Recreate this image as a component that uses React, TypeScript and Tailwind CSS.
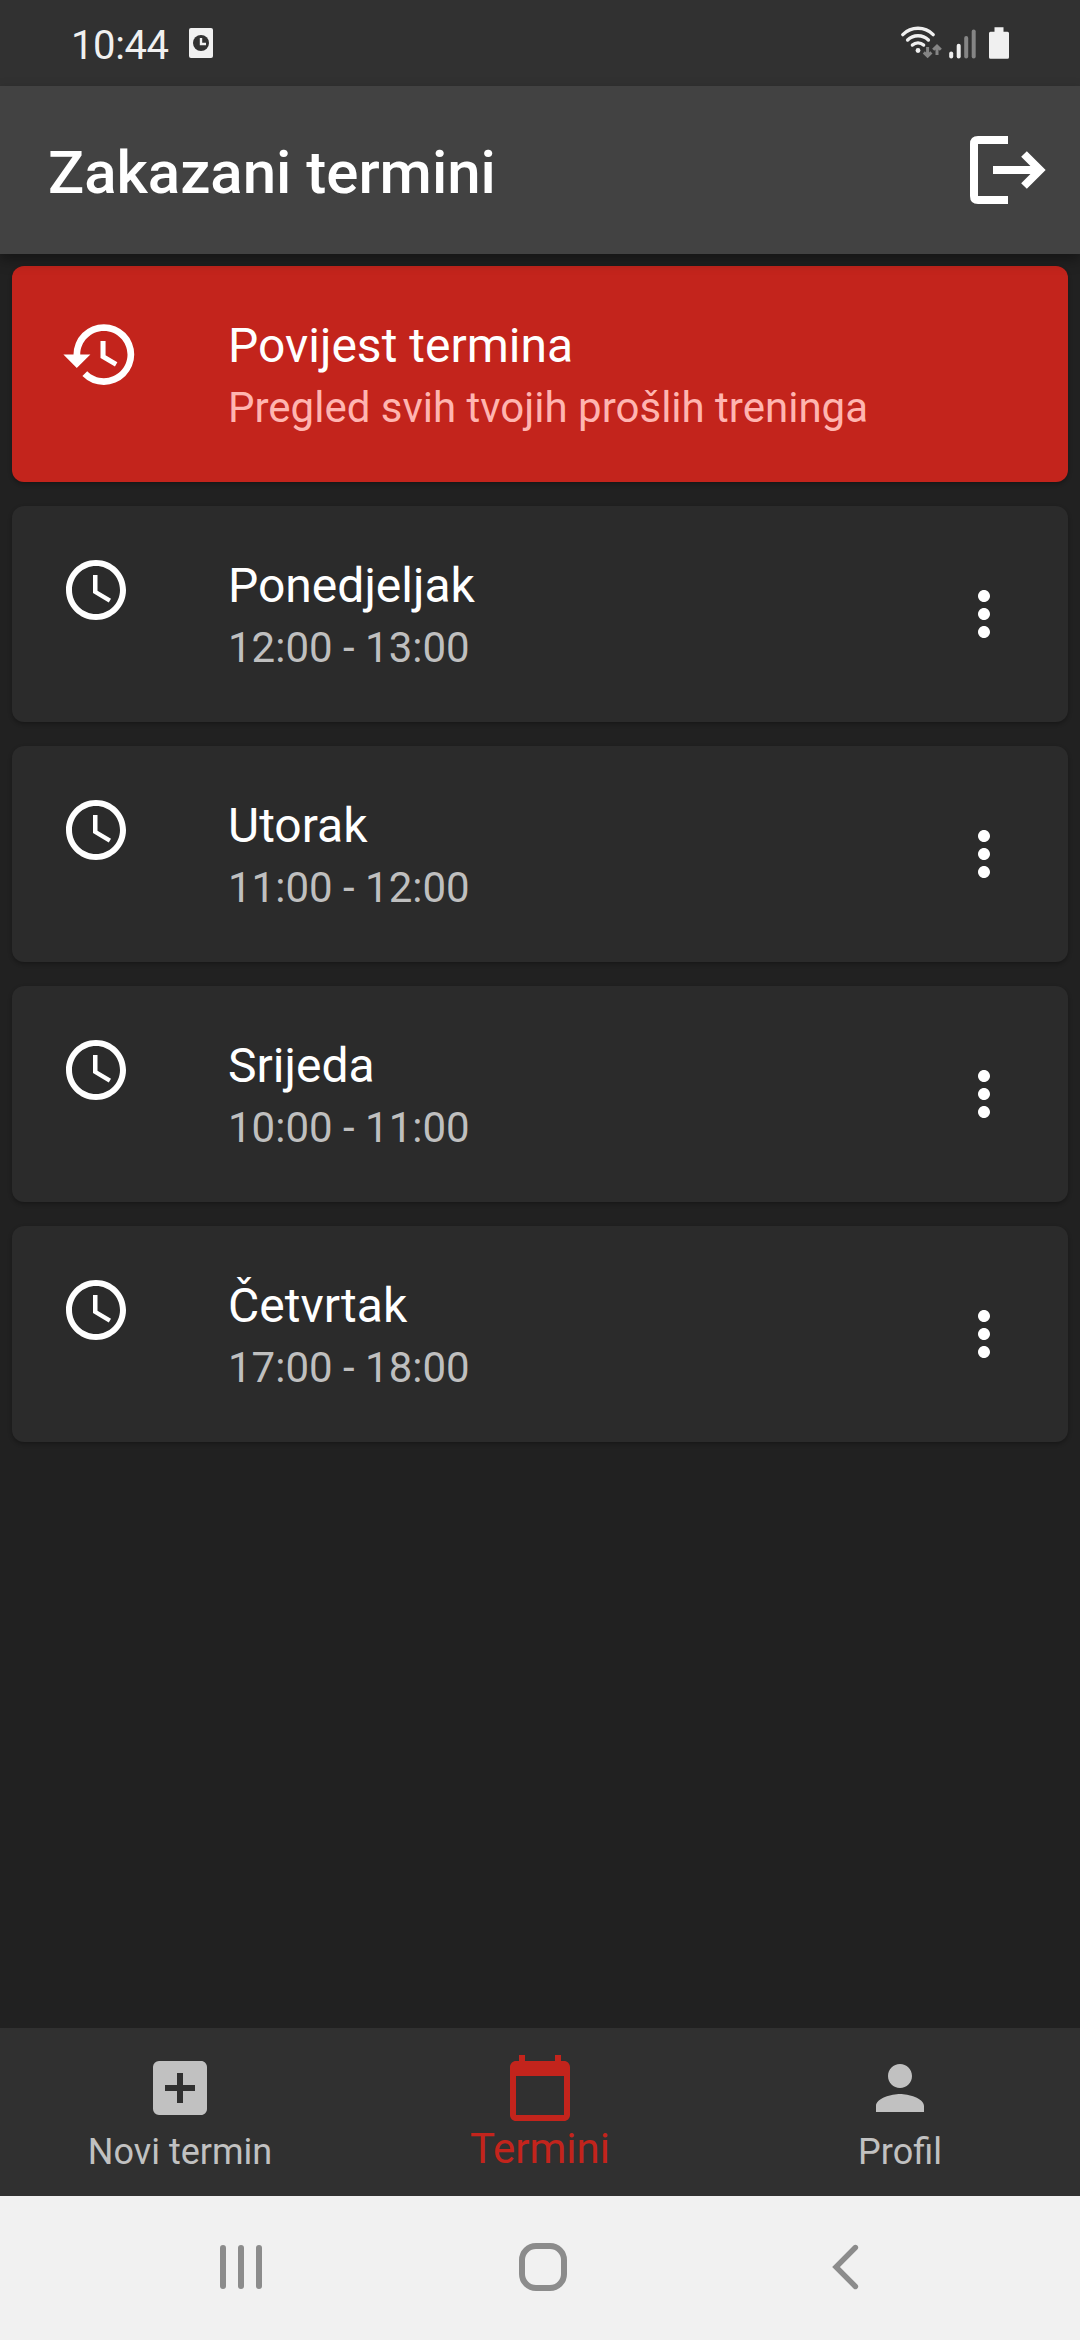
import { useState } from 'react';
import {
  MdAccessTime,
  MdAddBox,
  MdCalendarToday,
  MdHistory,
  MdMoreVert,
  MdPerson,
} from 'react-icons/md';

interface Appointment {
  id: number;
  day: string;
  time: string;
}

const appointments: Appointment[] = [
  { id: 1, day: 'Ponedjeljak', time: '12:00 - 13:00' },
  { id: 2, day: 'Utorak', time: '11:00 - 12:00' },
  { id: 3, day: 'Srijeda', time: '10:00 - 11:00' },
  { id: 4, day: 'Četvrtak', time: '17:00 - 18:00' },
];

const tabs = [
  { id: 'novi', label: 'Novi termin', icon: MdAddBox },
  { id: 'termini', label: 'Termini', icon: MdCalendarToday },
  { id: 'profil', label: 'Profil', icon: MdPerson },
];

function StatusBar() {
  return (
    <div className="flex h-[86px] shrink-0 items-start justify-between bg-[#313131] pl-[71px] pr-[70px] text-[#f0f0f0]">
      <div className="flex items-start">
        <span className="mt-[22px] text-[40px] leading-[48px] tracking-[-0.4px]">10:44</span>
        <svg className="ml-5 mt-7" width="24" height="30" viewBox="0 0 24 30">
          <rect width="24" height="30" rx="2" fill="#f0f0f0" />
          <circle cx="12" cy="15" r="8" fill="#313131" />
          <path d="M12 10v6h5" fill="none" stroke="#f0f0f0" strokeWidth="2.4" />
        </svg>
      </div>

      <svg className="mt-6" width="112" height="38" viewBox="898 24 112 38" fill="none">
        {/* Wi-Fi */}
        <g stroke="#f0f0f0" strokeWidth="3.4" strokeLinecap="round">
          <path d="M902.8 34.6a21.5 21.5 0 0 1 30.4 0" />
          <path d="M907.6 40a15 15 0 0 1 20.8 0" />
          <path d="M912.4 45a8.4 8.4 0 0 1 11.2 0" />
        </g>
        <circle cx="918" cy="50.5" r="2.4" fill="#f0f0f0" />
        <g stroke="#858585" strokeWidth="3">
          <path d="M927.6 47v9M923.8 52.4l3.8 3.8 3.8-3.8" />
          <path d="M937 55v-9M933.2 49.8l3.8-3.8 3.8 3.8" />
        </g>
        {/* Signal */}
        <g strokeWidth="4" strokeLinecap="round">
          <path d="M951.2 53.5v3" stroke="#f0f0f0" />
          <path d="M958.7 45.8v10.7" stroke="#f0f0f0" />
          <path d="M966.2 38v18.5" stroke="#858585" />
          <path d="M973.7 31.5v25" stroke="#858585" />
        </g>
        {/* Battery */}
        <path
          d="M994.5 27.3h9v4.5h4q1.5 0 1.5 1.5v24q0 1.5-1.5 1.5h-17q-1.5 0-1.5-1.5v-24q0-1.5 1.5-1.5h4z"
          fill="#f0f0f0"
        />
      </svg>
    </div>
  );
}

function AppBar() {
  return (
    <header className="z-10 flex h-[168px] shrink-0 items-center justify-between bg-[#424242] pl-12 pr-[34px] shadow-[0_6px_12px_rgba(0,0,0,0.35)]">
      <h1 className="pt-[5px] text-[60px] font-medium leading-[70px]">Zakazani termini</h1>
      <button aria-label="Odjava">
        <svg width="76" height="68" viewBox="0 0 76 68" fill="none" stroke="#fff" strokeWidth="8">
          <path d="M38 4H8Q4 4 4 8v52q0 4 4 4h30" />
          <path d="M23 34h46M54 18l16 16-16 16" />
        </svg>
      </button>
    </header>
  );
}

function AppointmentCard({ appointment }: { appointment: Appointment }) {
  return (
    <div className="flex h-[216px] items-start rounded-xl bg-[#2b2b2b] pl-12 pr-12 shadow-[0_2px_4px_rgba(0,0,0,0.3)]">
      <MdAccessTime size={72} className="mt-12 shrink-0" />
      <div className="ml-24 mt-[52px] flex-1">
        <h2 className="text-[48px] leading-[56px]">{appointment.day}</h2>
        <p className="mt-[9px] text-[42px] leading-[50px] text-[#bfbfbf]">{appointment.time}</p>
      </div>
      <button className="self-center" aria-label="Opcije">
        <MdMoreVert size={72} />
      </button>
    </div>
  );
}

export default function App() {
  const [activeTab, setActiveTab] = useState('termini');

  return (
    <div className="flex h-[2340px] w-[1080px] flex-col overflow-hidden bg-[#212121] font-[Roboto,sans-serif] text-white">
      <StatusBar />
      <AppBar />

      {/* List */}
      <main className="flex flex-1 flex-col gap-6 p-3">
        <div className="flex h-[216px] items-start rounded-xl bg-[#c3241c] pl-12 pr-12 shadow-[0_2px_4px_rgba(0,0,0,0.3)]">
          <MdHistory size={81} className="mt-12 shrink-0" />
          <div className="ml-[87px] mt-[52px] flex-1">
            <h2 className="text-[48px] leading-[56px]">Povijest termina</h2>
            <p className="mt-[9px] text-[42px] leading-[50px] text-[#ffb5b0]">
              Pregled svih tvojih prošlih treninga
            </p>
          </div>
        </div>
        {appointments.map((a) => (
          <AppointmentCard key={a.id} appointment={a} />
        ))}
      </main>

      {/* Bottom tabs */}
      <nav className="grid h-[168px] shrink-0 grid-cols-3 bg-[#303030]">
        {tabs.map(({ id, label, icon: Icon }) => (
          <button
            key={id}
            onClick={() => setActiveTab(id)}
            className={`flex flex-col items-center pt-6 ${
              activeTab === id ? 'text-[#c3241c]' : 'text-[#c1c1c1]'
            }`}
          >
            <Icon size={72} />
            <span
              className={
                activeTab === id
                  ? 'text-[42px] leading-[50px]'
                  : 'mt-1 text-[36px] leading-[48px]'
              }
            >
              {label}
            </span>
          </button>
        ))}
      </nav>

      {/* System navigation */}
      <div className="flex h-36 shrink-0 items-center bg-[#f1f1f1] pb-0.5 pl-[220px]">
        <svg width="42" height="48" viewBox="0 0 42 48" stroke="#8c8c8c" strokeWidth="6" strokeLinecap="round">
          <path d="M3 5v38M21 5v38M39 5v38" />
        </svg>
        <svg className="ml-[257px]" width="48" height="48" viewBox="0 0 48 48" fill="none" stroke="#8c8c8c" strokeWidth="6">
          <rect x="3" y="3" width="42" height="42" rx="14" />
        </svg>
        <svg className="ml-[265px]" width="28" height="48" viewBox="0 0 28 48" fill="none" stroke="#8c8c8c" strokeWidth="5.4" strokeLinecap="round">
          <path d="M23.4 4.5L4 24l19.4 19.5" />
        </svg>
      </div>
    </div>
  );
}
